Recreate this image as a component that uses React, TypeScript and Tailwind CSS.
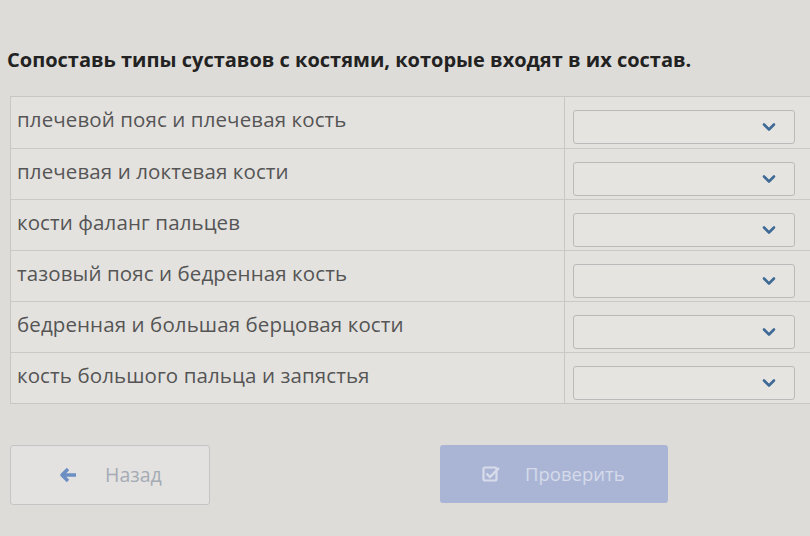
import React from "react";

const rows = [
  "плечевой пояс и плечевая кость",
  "плечевая и локтевая кости",
  "кости фаланг пальцев",
  "тазовый пояс и бедренная кость",
  "бедренная и большая берцовая кости",
  "кость большого пальца и запястья",
];

function Chevron() {
  return (
    <svg width="14" height="10" viewBox="0 0 14 10" fill="none">
      <path d="M2 2.5 L7 7.5 L12 2.5" stroke="#3f6a96" strokeWidth="2.6" strokeLinecap="round" strokeLinejoin="round" />
    </svg>
  );
}

export default function App() {
  return (
    <div
      className="w-[810px] h-[536px] overflow-hidden bg-[#dedcd8] relative"
      style={{ fontFamily: '"Open Sans", "Noto Sans", sans-serif' }}
    >
      <div className="pt-[46px] pl-[7px]">
        <h1 className="text-[20px] font-bold text-[#222] leading-[28px] tracking-[0px]">
          Сопоставь типы суставов с костями, которые входят в их состав.
        </h1>
        <div className="mt-[22px] ml-[3px] w-[830px] border border-[#c9c7c3] bg-[#e4e2df]">
          {rows.map((r, i) => (
            <div
              key={i}
              className={`flex h-[51px] ${i > 0 ? "border-t border-[#cbc9c5]" : ""}`}
            >
              <div className="w-[554px] border-r border-[#c9c7c3] pl-[6px] pt-[8px] text-[20.5px] text-[#555] leading-[28px] tracking-[0.1px]">
                {r}
              </div>
              <div className="flex-1 pl-[8px] pt-[13px]">
                <div className="w-[222px] h-[34px] border border-[#b9bab9] rounded-[3px] bg-[#e6e4e1] flex items-center justify-end pr-[18px]">
                  <Chevron />
                </div>
              </div>
            </div>
          ))}
        </div>
      </div>
      <div className="flex mt-[41px] pl-[10px]">
        <div className="w-[200px] h-[60px] border border-[#c4c4c4] rounded-[3px] bg-[#e3e2e0] flex items-center pl-[48px]">
          <svg width="20" height="16" viewBox="0 0 20 16">
            <path d="M9 2 L3 8 L9 14 M3 8 L17 8" stroke="#6b8fc2" strokeWidth="3.5" fill="none" strokeLinejoin="round" />
          </svg>
          <span className="ml-[26px] text-[19.5px] text-[#a5abb5]">Назад</span>
        </div>
        <div className="ml-[230px] w-[228px] h-[58px] rounded-[3px] bg-[#aab5d6] flex items-center pl-[42px]">
          <svg width="20" height="18" viewBox="0 0 20 18">
            <rect x="1.5" y="2.5" width="13" height="13" rx="1.5" stroke="#d8dcea" strokeWidth="2.2" fill="none" />
            <path d="M4.5 8.5 L8 12 L17 3" stroke="#d8dcea" strokeWidth="2.4" fill="none" />
          </svg>
          <span className="ml-[23px] text-[18.5px] text-[#d6dbea]">Проверить</span>
        </div>
      </div>
    </div>
  );
}
